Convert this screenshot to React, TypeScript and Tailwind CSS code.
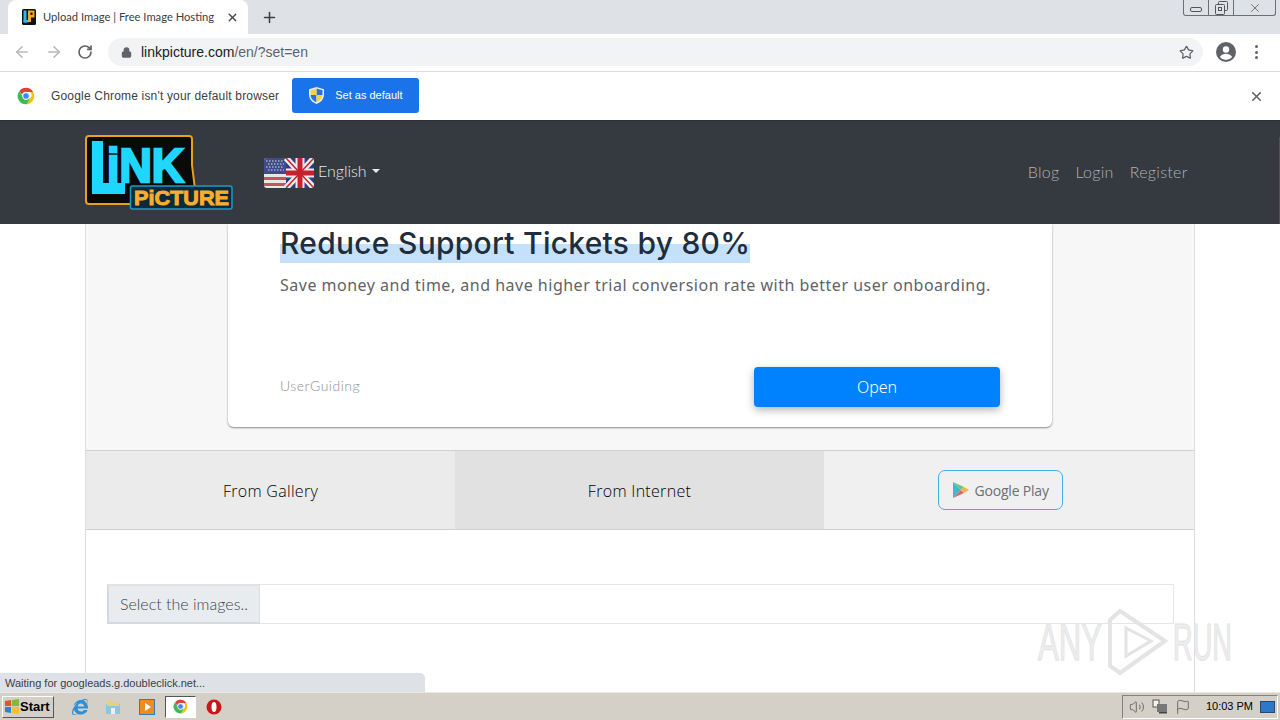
import { ArrowLeft, ArrowRight, Flag, Lock, Plus, RotateCw, Star, Volume2, X } from 'lucide-react'
import { FaInternetExplorer } from 'react-icons/fa'

function ChromeLogo({ size }: { size: number }) {
  return (
    <svg width={size} height={size} viewBox="0 0 48 48">
      <path d="M24 2a22 22 0 0 1 19 11H24a11 11 0 0 0-10.500 7.500L6.500 10.500A22 22 0 0 1 24 2z" fill="#db4437" />
      <path d="M43 13a22 22 0 0 1-17 33l9-16a11 11 0 0 0 0-17z" fill="#f4c20d" />
      <path d="M26 46A22 22 0 0 1 6.500 10.500l8.500 14.500a11 11 0 0 0 11 9l9-4z" fill="#3cba54" />
      <circle cx="24" cy="24" r="9" fill="#4285f4" stroke="#fff" strokeWidth="2.500" />
    </svg>
  )
}

function Shield() {
  return (
    <svg width="15" height="17" viewBox="0 0 15 17">
      <path d="M7.500 0 15 2.200V8c-.4 4.500-3.500 7.500-7.500 9C3.500 15.500.4 12.500 0 8V2.200z" fill="#e8eef8" />
      <path d="M7.500 1.500 13.500 3.200V8H7.500z" fill="#2f6fd0" />
      <path d="M7.500 1.500 1.500 3.200V8h6z" fill="#f5d33f" />
      <path d="M1.500 8h6v7.300C4.500 14 2 12 1.500 8z" fill="#2f6fd0" />
      <path d="M13.500 8h-6v7.300C10.500 14 13 12 13.500 8z" fill="#f5d33f" />
    </svg>
  )
}

function Favicon() {
  return (
    <svg width="14" height="16" viewBox="0 0 14 16">
      <rect x="0" y="0" width="14" height="16" rx="1.500" fill="#111" />
      <rect x="1.500" y="1.500" width="3" height="12" fill="#2fb7e8" />
      <rect x="1.500" y="11" width="5" height="2.500" fill="#2fb7e8" />
      <path d="M6 1.500h6.500v7H9V13H6z" fill="#f5a623" />
      <rect x="8.500" y="3.500" width="2" height="2.500" fill="#111" />
    </svg>
  )
}

function Profile() {
  return (
    <svg width="20" height="20" viewBox="0 0 20 20">
      <circle cx="10" cy="10" r="10" fill="#5f6368" />
      <circle cx="10" cy="7.500" r="3.200" fill="#fff" />
      <path d="M3.800 15c1.500-2.300 3.800-3.200 6.200-3.200s4.700.9 6.200 3.200A8 8 0 0 1 3.800 15z" fill="#fff" />
    </svg>
  )
}

function WindowButtons() {
  return (
    <div className="absolute top-0 right-[4px] flex h-[16px] w-[93px] rounded-b-[3px] border border-t-0 border-[#6b6f76]">
      <div className="flex w-[25px] items-end justify-center border-r border-[#6b6f76] pb-[3px]">
        <div className="h-[5px] w-[12px] rounded-[2px] border border-[#555]" />
      </div>
      <div className="flex w-[25px] items-center justify-center border-r border-[#6b6f76]">
        <svg width="13" height="14" viewBox="0 0 13 14" fill="none" stroke="#555">
          <rect x="3.500" y="0.500" width="9" height="9" rx="1" />
          <rect x="0.500" y="3.500" width="9" height="10" rx="1" fill="#dee1e6" />
          <rect x="3.500" y="6.500" width="3" height="3" />
        </svg>
      </div>
      <div className="flex flex-1 items-center justify-center">
        <X className="h-[14px] w-[14px] text-[#666]" strokeWidth={1.500} />
      </div>
    </div>
  )
}

function TabStrip() {
  return (
    <div className="relative flex h-[34px] shrink-0 items-center bg-[#dee1e6] pl-[8px]">
      <div className="flex h-[34px] w-[240px] items-center rounded-t-[8px] bg-white pl-[14px] pr-[9px]">
        <Favicon />
        <span className="ml-[7px] w-[172px] overflow-hidden whitespace-nowrap text-[11.200px] text-[#3c4043] [font-family:Lato,sans-serif]">
          Upload Image | Free Image Hosting
        </span>
        <X className="ml-auto h-[13px] w-[13px] text-[#45484c]" strokeWidth={2.500} />
      </div>
      <Plus className="ml-[13px] h-[17px] w-[17px] text-[#3c4043]" strokeWidth={2.200} />
      <WindowButtons />
    </div>
  )
}

function Toolbar() {
  return (
    <div className="flex h-[38px] shrink-0 items-center border-b border-[#dadce0] bg-white pb-[1px]">
      <div className="flex w-[108px] items-center pl-[13px] text-[#b5b8bb]">
        <ArrowLeft className="h-[18px] w-[18px]" strokeWidth={2} />
        <ArrowRight className="ml-[14px] h-[18px] w-[18px]" strokeWidth={2} />
        <RotateCw className="ml-[14px] h-[16px] w-[16px] text-[#5f6368]" strokeWidth={2.500} />
      </div>
      <div className="flex h-[28px] w-[1095px] items-center rounded-full bg-[#f1f3f4] pl-[13px] pr-[9px]">
        <Lock className="h-[11px] w-[11px] fill-[#5f6368] text-[#5f6368]" strokeWidth={2.500} />
        <span className="ml-[9px] text-[14px] text-[#202124] [font-family:'Liberation_Sans',sans-serif]">
          linkpicture.com<span className="text-[#5f6368]">/en/?set=en</span>
        </span>
        <Star className="ml-auto h-[15px] w-[15px] text-[#5f6368]" strokeWidth={2} />
      </div>
      <div className="ml-[13px]">
        <Profile />
      </div>
      <div className="ml-[19px] flex flex-col gap-[2.500px]">
        <div className="h-[3px] w-[3px] rounded-full bg-[#5f6368]" />
        <div className="h-[3px] w-[3px] rounded-full bg-[#5f6368]" />
        <div className="h-[3px] w-[3px] rounded-full bg-[#5f6368]" />
      </div>
    </div>
  )
}

function DefaultBar() {
  return (
    <div className="flex h-[48px] shrink-0 items-center bg-white pl-[17px] pr-[16px]">
      <ChromeLogo size={18} />
      <span className="ml-[16px] text-[12px] tracking-[0.18px] text-[#3c4043] [font-family:'Liberation_Sans',sans-serif]">
        Google Chrome isn't your default browser
      </span>
      <button className="mb-[1px] ml-[13px] flex h-[35px] w-[127px] items-center rounded-[3px] bg-[#1a73e8] pl-[17px] text-[11px] text-white [font-family:'Liberation_Sans',sans-serif]">
        <Shield />
        <span className="ml-[11px]">Set as default</span>
      </button>
      <X className="ml-auto h-[15px] w-[15px] text-[#5f6368]" strokeWidth={2.500} />
    </div>
  )
}

function Logo() {
  const font = "'Liberation Sans', sans-serif"
  return (
    <svg width="148" height="76" viewBox="0 0 148 76">
      <path
        d="M4 1h100a3 3 0 0 1 3 3v26l3 24-3 2H48v10l-3 3H4a3 3 0 0 1-3-3V4a3 3 0 0 1 3-3z"
        fill="#0a0a0a"
        stroke="#e6a218"
        strokeWidth="2"
      />
      <path d="M7 6h11v42h22v11H7z" fill="#1fd6ff" />
      <text x="22" y="47" fontFamily={font} fontWeight="900" fontSize="48" fill="#1fd6ff" stroke="#1fd6ff" strokeWidth="2.500" textLength="77" lengthAdjust="spacingAndGlyphs">
        iNK
      </text>
      <rect x="45.500" y="51" width="101.500" height="23" rx="2" fill="#0a2c3a" stroke="#1d9ac6" strokeWidth="1.500" />
      <text x="49" y="70" fontFamily={font} fontWeight="900" fontSize="20" fill="#f9ad2c" stroke="#f9ad2c" strokeWidth="0.900" textLength="95" lengthAdjust="spacingAndGlyphs">
        PiCTURE
      </text>
    </svg>
  )
}

function UkUsFlag() {
  return (
    <svg width="50" height="30" viewBox="0 0 50 30" className="rounded-[3px]">
      <rect width="50" height="30" fill="#c8202f" />
      <rect width="25" height="30" fill="#ece6e6" />
      <rect y="4" width="25" height="3" fill="#c25560" />
      <rect y="19" width="25" height="3" fill="#c25560" />
      <rect y="25" width="25" height="3" fill="#c25560" />
      <rect width="22" height="16" fill="#3f4d86" />
      <path d="M2 3h18M4 6h16M2 9h18M4 12h16" stroke="#d7dae8" strokeWidth="1" strokeDasharray="1.500 1.500" />
      <path d="M22 0h28v30H22z" fill="#2b3f80" />
      <path d="M22 0 50 30M50 0 22 30" stroke="#efeaea" strokeWidth="6" />
      <path d="M36 0v30M22 15h28" stroke="#efeaea" strokeWidth="9" />
      <path d="M36 0v30M22 15h28" stroke="#c8202f" strokeWidth="5" />
      <path d="M22 0 50 30M50 0 22 30" stroke="#c8202f" strokeWidth="1.500" />
    </svg>
  )
}

function SiteNav() {
  return (
    <div className="flex h-[104px] shrink-0 items-center border-t border-[#2c3035] bg-[#343a40] pl-[85px]">
      <Logo />
      <div className="ml-[31px] flex items-center">
        <UkUsFlag />
        <span className="mb-[3px] ml-[4px] text-[16px] font-light text-[#e9eaeb] [font-family:Lato,sans-serif]">English</span>
        <span className="mb-[4px] ml-[5px] h-0 w-0 border-x-[4.500px] border-t-[4.500px] border-x-transparent border-t-[#e9eaeb]" />
      </div>
      <div className="mb-[1px] ml-[648px] flex gap-[16px] text-[16px] font-light tracking-[0.3px] text-[#b0b2b4] [font-family:Lato,sans-serif]">
        <span>Blog</span>
        <span>Login</span>
        <span>Register</span>
      </div>
    </div>
  )
}

function PlayBadge() {
  return (
    <div className="mr-[18px] flex h-[40px] w-[125px] items-center rounded-[7px] border border-[#45ade8] pl-[13px]">
      <svg width="18" height="18" viewBox="0 0 18 18">
        <path d="M1 1v16l8-8z" fill="#45b7c9" />
        <path d="M1 1l8 8 3-3z" fill="#70c08c" />
        <path d="M1 17l8-8 3 3z" fill="#e0655f" />
        <path d="M12 6l5 3-5 3-3-3z" fill="#f3b34c" />
      </svg>
      <span className="ml-[5px] text-[14px] font-medium tracking-[-0.2px] text-[#6d6e71] [font-family:'Open_Sans',sans-serif]">
        Google Play
      </span>
    </div>
  )
}

function AdCard() {
  return (
    <div className="h-[226px] bg-[#f7f7f7] px-[142px] pb-[23px]">
      <div className="flex h-[203px] flex-col rounded-b-[6px] bg-white px-[52px] shadow-[0_1px_2px_rgba(0,0,0,0.45)]">
        <h1 className="relative w-fit text-[30px] font-medium leading-[38px] tracking-[0.26px] text-[#1f2d3d] [font-family:Inter,sans-serif]">
          <span className="absolute inset-x-0 top-[20px] h-[19px] bg-[#c5e1fa]" />
          <span className="relative">Reduce Support Tickets by 80%</span>
        </h1>
        <p className="mt-[11px] whitespace-nowrap text-[16px] leading-[24px] tracking-[0.5px] text-[#5f6368] [font-family:'Noto_Sans',sans-serif]">
          Save money and time, and have higher trial conversion rate with better user onboarding.
        </p>
        <div className="mt-[70px] flex items-center justify-between">
          <span className="mb-[3px] text-[14px] font-light tracking-[0.5px] text-[#8f8f8f] [font-family:Lato,sans-serif]">UserGuiding</span>
          <button className="h-[40px] w-[246px] rounded-[4px] bg-[#0082ff] text-[16px] font-light text-white shadow-[0_3px_8px_rgba(0,0,0,0.3)] [font-family:'Noto_Sans',sans-serif]">
            Open
          </button>
        </div>
      </div>
    </div>
  )
}

function SourceTabs() {
  return (
    <div className="grid h-[80px] grid-cols-[369px_369px_1fr] border-y border-[#cfcfcf] text-[16px] font-light tracking-[0.3px] text-black [font-family:'Open_Sans',sans-serif]">
      <div className="flex items-center justify-center bg-[#ebebeb] pt-[2px]">From Gallery</div>
      <div className="flex items-center justify-center bg-[#e1e1e1] pt-[2px]">From Internet</div>
      <div className="flex items-center justify-center bg-[#f0f0f0]">
        <PlayBadge />
      </div>
    </div>
  )
}

function FilePicker() {
  return (
    <div className="flex-1 bg-white pl-[21px] pr-[20px] pt-[54px]">
      <div className="flex h-[40px]">
        <div className="flex w-[153px] items-center border-2 border-r border-[#d5d8dc] border-r-[#dcdfe3] border-t-[#e0e2e5] bg-[#e9ecef] pl-[11px] text-[16px] font-light text-[#3f454b] [font-family:Lato,sans-serif]">
          Select the images..
        </div>
        <div className="flex-1 border-y border-r border-[#e6e6e6]" />
      </div>
    </div>
  )
}

function Watermark() {
  const font = "'Liberation Sans', sans-serif"
  return (
    <svg width="200" height="68" viewBox="0 0 200 68" className="pointer-events-none absolute left-[1036px] top-[608px]">
      <text transform="translate(2 52) scale(0.61 1)" fontFamily={font} fontSize="51" fill="#ededed" stroke="#e2e2e2">
        ANY
      </text>
      <path d="M84 3 129 33 84 65 74 58V12z" fill="none" stroke="#e4e4e4" strokeWidth="4" />
      <path d="M90 20 115 33 90 48z" fill="none" stroke="#e4e4e4" strokeWidth="3" />
      <text transform="translate(137 52) scale(0.534 1)" fontFamily={font} fontSize="51" fill="#ededed" stroke="#e2e2e2">
        RUN
      </text>
    </svg>
  )
}

function StatusBubble() {
  return (
    <div className="absolute bottom-[28px] left-0 flex h-[19px] w-[425px] items-center rounded-tr-[5px] bg-[#dee1e6] pl-[5px] pt-[1px] text-[11px] text-[#3c4043] [font-family:'Liberation_Sans',sans-serif]">
      Waiting for googleads.g.doubleclick.net...
    </div>
  )
}

function StartButton() {
  return (
    <button className="flex h-[22px] w-[52px] items-center border border-b-[#555] border-l-white border-r-[#555] border-t-white bg-[#d4d0c8] pl-[1px] text-[13px] font-bold text-black [font-family:'Liberation_Sans',sans-serif]">
      <svg width="16" height="15" viewBox="0 0 16 15">
        <path d="M1 2 7 1v6H1z" fill="#e2552b" />
        <path d="M8 1l7-1v7H8z" fill="#7fba3a" />
        <path d="M1 8h6v6l-6-1z" fill="#2f80d8" />
        <path d="M8 8h7v7l-7-1z" fill="#f5c02e" />
      </svg>
      <span>Start</span>
    </button>
  )
}

function Taskbar() {
  return (
    <div className="flex h-[28px] shrink-0 items-center border-t border-[#ece9e2] bg-[#d4d0c8] px-[2px]">
      <StartButton />
      <FaInternetExplorer className="ml-[18px] h-[16px] w-[16px] text-[#2f8fd8]" />
      <svg width="16" height="16" viewBox="0 0 16 16" className="ml-[17px]">
        <path d="M1 5h14v10H1z" fill="#8fc6d8" />
        <path d="M2 2h5l2 2h5v3H2z" fill="#e8cf78" />
        <rect x="6" y="9" width="4" height="6" fill="#e8f0f4" />
      </svg>
      <svg width="16" height="16" viewBox="0 0 16 16" className="ml-[18px]">
        <rect x="0.500" y="0.500" width="15" height="15" fill="#f08c1e" stroke="#3a78b8" />
        <path d="M6 4l6 4-6 4z" fill="#fff" />
      </svg>
      <div className="ml-[10px] flex h-[22px] w-[31px] items-center justify-center border border-b-white border-l-[#555] border-r-white border-t-[#555] bg-white">
        <ChromeLogo size={15} />
      </div>
      <svg width="16" height="16" viewBox="0 0 16 16" className="ml-[10px]">
        <circle cx="8" cy="8" r="7.500" fill="#cc1518" />
        <ellipse cx="8" cy="8" rx="2.500" ry="5" fill="#fff" />
      </svg>
      <div className="ml-auto flex h-[24px] w-[156px] items-center border border-b-white border-l-[#85827b] border-r-white border-t-[#85827b] pl-[6px] pr-[2px]">
        <Volume2 className="h-[16px] w-[16px] text-[#555]" strokeWidth={1.200} />
        <svg width="16" height="15" viewBox="0 0 16 15" className="ml-[7px]">
          <rect x="1" y="1" width="6" height="7" fill="#f4f1e8" stroke="#555" />
          <rect x="5" y="5" width="10" height="8" fill="#777" />
          <rect x="7" y="13" width="8" height="1.500" fill="#444" />
        </svg>
        <Flag className="ml-[7px] h-[16px] w-[16px] text-[#555]" strokeWidth={1.200} />
        <span className="ml-[15px] whitespace-nowrap text-[11px] text-black [font-family:'Liberation_Sans',sans-serif]">10:03 PM</span>
        <div className="ml-[7px] h-[12px] w-[15px] shrink-0 border border-[#27496f] bg-[#2f78c8]" />
      </div>
    </div>
  )
}

export default function App() {
  return (
    <div className="relative flex h-[720px] w-[1280px] flex-col overflow-hidden bg-white">
      <TabStrip />
      <Toolbar />
      <DefaultBar />
      <div className="relative">
        <SiteNav />
        <div className="absolute right-0 top-[17px] h-[87px] w-[1px] bg-[#b02a2a]" />
      </div>
      <div className="min-h-0 flex-1 overflow-hidden bg-white px-[85px]">
        <div className="flex h-full flex-col border-x border-[#dddddd]">
          <AdCard />
          <SourceTabs />
          <FilePicker />
        </div>
      </div>
      <Taskbar />
      <StatusBubble />
      <Watermark />
    </div>
  )
}
